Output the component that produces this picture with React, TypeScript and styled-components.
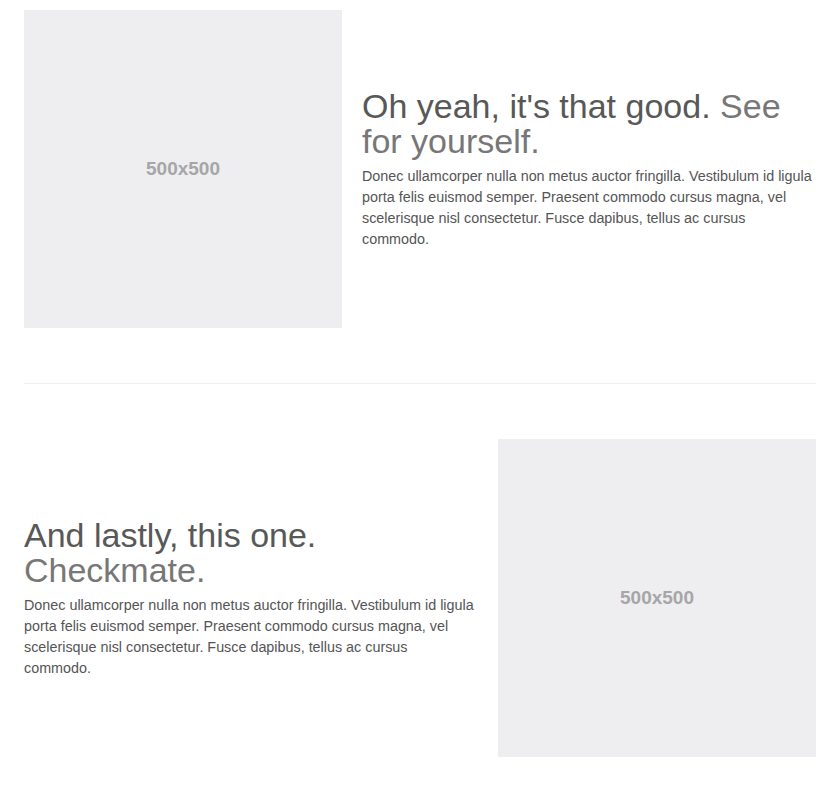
import React from "react";
import styled, { createGlobalStyle } from "styled-components";

const GlobalStyle = createGlobalStyle`
  html, body { margin: 0; padding: 0; background: #ffffff; }
  body { font-family: "Liberation Sans", Arial, Helvetica, sans-serif; color: #555; }
  * { box-sizing: border-box; }
`;

const Page = styled.main`
  padding: 10px 23px 30px 24px;
`;

const Featurette = styled.section<{ $reverse?: boolean }>`
  display: grid;
  grid-template-columns: ${(p) => (p.$reverse ? "1fr 318px" : "318px 1fr")};
  column-gap: 20px;
  align-items: center;
`;

const Placeholder = styled.div`
  width: 318px;
  height: 318px;
  background: #eeedf0;
  display: flex;
  align-items: center;
  justify-content: center;
  color: #a6a6a8;
  font-family: "Liberation Sans", Arial, sans-serif;
  font-weight: bold;
  font-size: 19px;
`;

const TextCol = styled.div`
  display: flex;
  flex-direction: column;
`;

const Heading = styled.h2`
  margin: 0 0 7px 0;
  font-family: "Liberation Sans", Arial, sans-serif;
  font-weight: normal;
  font-size: 34px;
  line-height: 35px;
  color: #585858;
`;

const Muted = styled.span`
  color: #777;
`;

const Lead = styled.p`
  margin: 0;
  max-width: 452px;
  font-size: 14.35px;
  line-height: 21px;
  color: #555;
`;

const Divider = styled.hr`
  border: 0;
  border-top: 1px solid #f0f0f0;
  margin: 55px 0 55px 0;
`;

const body =
  "Donec ullamcorper nulla non metus auctor fringilla. Vestibulum id ligula porta felis euismod semper. Praesent commodo cursus magna, vel scelerisque nisl consectetur. Fusce dapibus, tellus ac cursus commodo.";

export default function App() {
  return (
    <>
      <GlobalStyle />
      <Page>
        <Featurette>
          <Placeholder>500x500</Placeholder>
          <TextCol>
            <Heading>
              Oh yeah, it's that good. <Muted>See for yourself.</Muted>
            </Heading>
            <Lead>{body}</Lead>
          </TextCol>
        </Featurette>
        <Divider />
        <Featurette $reverse>
          <TextCol>
            <Heading>
              And lastly, this one. <Muted>Checkmate.</Muted>
            </Heading>
            <Lead>{body}</Lead>
          </TextCol>
          <Placeholder>500x500</Placeholder>
        </Featurette>
      </Page>
    </>
  );
}
